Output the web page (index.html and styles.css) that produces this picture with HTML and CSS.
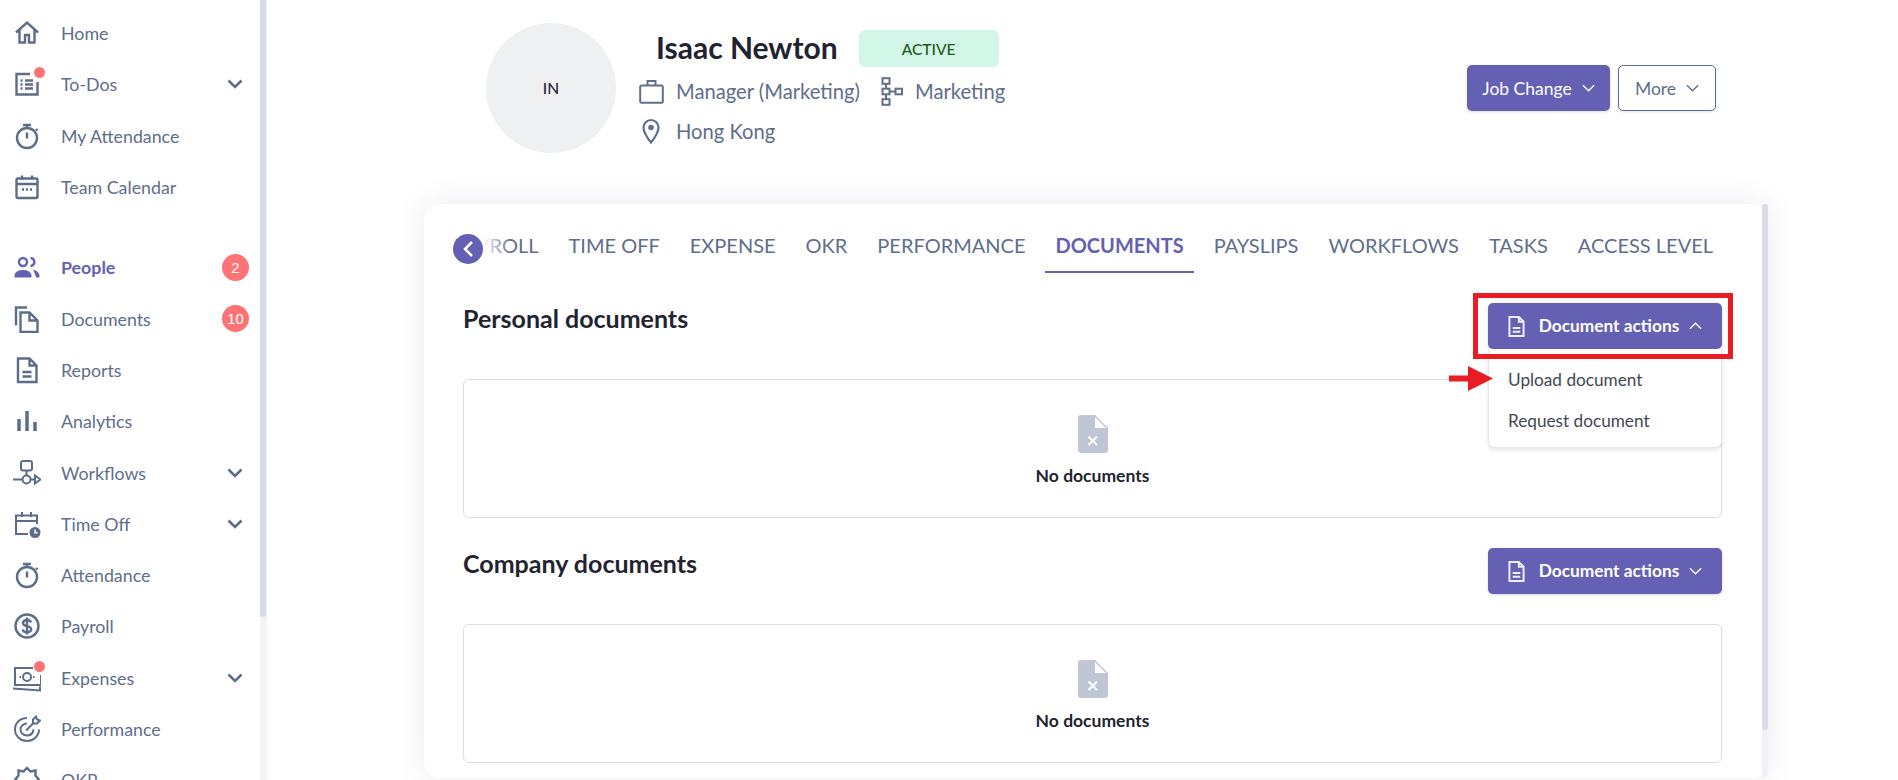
FILE: index.html
```html
<!DOCTYPE html>
<html lang="en">
<head>
<meta charset="utf-8">
<title>Isaac Newton - Documents</title>
<link rel="stylesheet" href="styles.css">
</head>
<body>
<div class="app">
  <nav class="sidebar">
    <div class="nav-group">
      <a class="nav-item"><span class="nav-icon"><svg viewBox="0 0 28 28" class="ico"><path d="M3 13.500 14 3.500l11 10M6.500 11v12.500h5.500V16h4v7.500h5.500V11"/></svg></span><span class="nav-label">Home</span></a>
      <a class="nav-item"><span class="nav-icon"><svg viewBox="0 0 28 28" class="ico"><path d="M17 4H3.500v20.500h21V12M7.500 10.500h2M12 10.500h8M7.500 14.500h2M12 14.500h8M7.500 18.500h2M12 18.500h8"/></svg><i class="dot"></i></span><span class="nav-label">To-Dos</span><svg class="chev" viewBox="0 0 16 10"><path d="M1.500 1.500 8 8l6.500-6.500"/></svg></a>
      <a class="nav-item"><span class="nav-icon"><svg viewBox="0 0 28 28" class="ico"><circle cx="14" cy="16" r="10"/><path d="M10 3h8M14 3v3M14 10.500V16.500M23 7l1.500 1.500"/></svg></span><span class="nav-label">My Attendance</span></a>
      <a class="nav-item"><span class="nav-icon"><svg viewBox="0 0 28 28" class="ico"><rect x="3.500" y="5.500" width="21" height="19.500" rx="1.500"/><path d="M3.500 11h21M9 2.500v4M19 2.500v4M9 16.500h2M13 16.500h2M17 16.500h2"/></svg></span><span class="nav-label">Team Calendar</span></a>
    </div>
    <div class="nav-group nav-group-second">
      <a class="nav-item active"><span class="nav-icon"><svg viewBox="0 0 28 28" class="ico"><circle cx="10" cy="9" r="4"/><path d="M17.500 5c2.500.3 3.800 2 3.800 4s-1.300 3.700-3.800 4"/><path d="M2 24v-1.500c0-3.500 3.500-5 8-5s8 1.500 8 5V24zM20.500 17.500c3 .5 5.500 2 5.500 5V24h-3"/></svg></span><span class="nav-label">People</span><span class="count">2</span></a>
      <a class="nav-item"><span class="nav-icon"><svg viewBox="0 0 28 28" class="ico"><path d="M14 2.500H3v18"/><path d="M7.500 7.500h9l8 8v11.500h-17zM16.500 7.500v8h8" /></svg></span><span class="nav-label">Documents</span><span class="count">10</span></a>
      <a class="nav-item"><span class="nav-icon"><svg viewBox="0 0 28 28" class="ico"><path d="M5 2.500h11.500l7 7v16.500H5zM16.500 2.500v7h7M9.500 16h9M9.500 20.500h9"/></svg></span><span class="nav-label">Reports</span></a>
      <a class="nav-item"><span class="nav-icon"><svg viewBox="0 0 28 28" class="ico bars"><path d="M6 12v12M14 4v20M22 15v9"/></svg></span><span class="nav-label">Analytics</span></a>
      <a class="nav-item"><span class="nav-icon"><svg viewBox="0 0 28 28" class="ico thin"><rect x="8" y="2" width="11" height="9.500" rx="2"/><path d="M13.500 11.500v4.500M0 20.500h9.500M18 20.500h4"/><circle cx="13.500" cy="20.500" r="4"/><path d="M22 16.500l5.500 4-5.500 4z"/></svg></span><span class="nav-label">Workflows</span><svg class="chev" viewBox="0 0 16 10"><path d="M1.500 1.500 8 8l6.500-6.500"/></svg></a>
      <a class="nav-item"><span class="nav-icon"><svg viewBox="0 0 28 28" class="ico thin"><path d="M15 24H3V5.500h21V14M3 11h21M9 2v5M18 2v5"/><circle cx="22" cy="22.500" r="5.500" class="solid"/><path d="M22 19.500v3.300h2.500" class="cut"/></svg></span><span class="nav-label">Time Off</span><svg class="chev" viewBox="0 0 16 10"><path d="M1.500 1.500 8 8l6.500-6.500"/></svg></a>
      <a class="nav-item"><span class="nav-icon"><svg viewBox="0 0 28 28" class="ico"><circle cx="14" cy="16" r="10"/><path d="M10 3h8M14 3v3M14 10.500V16.500M23 7l1.500 1.500"/></svg></span><span class="nav-label">Attendance</span></a>
      <a class="nav-item"><span class="nav-icon"><svg viewBox="0 0 28 28" class="ico"><circle cx="14" cy="14" r="11.500"/><path d="M18 10.500c-.5-1.800-2-2.500-4-2.500-2.300 0-4 1.100-4 3 0 4.500 8.200 1.800 8.200 6.300 0 1.900-1.800 2.900-4.200 2.900-2.300 0-3.900-.9-4.300-2.800M14 5.500v17"/></svg></span><span class="nav-label">Payroll</span></a>
      <a class="nav-item"><span class="nav-icon"><svg viewBox="0 0 28 28" class="ico thin"><path d="M20 4H2v17h26V11"/><path d="M0 24.500l27 2v-4"/><circle cx="14" cy="13" r="4"/><path d="M6.500 13h1.500M20 13h1.500"/></svg><i class="dot"></i></span><span class="nav-label">Expenses</span><svg class="chev" viewBox="0 0 16 10"><path d="M1.500 1.500 8 8l6.500-6.500"/></svg></a>
      <a class="nav-item"><span class="nav-icon"><svg viewBox="0 0 28 28" class="ico thin"><path d="M14 3C7 3 2 8 2 14.500S7.500 26 14 26s12-5 12-11.500"/><path d="M14 8.500c-3.500 0-6.500 2.700-6.500 6s2.800 6 6.500 6 6-2.500 6.500-6"/><path d="M13 15.500l7-7M20 8.500V4.500l3-3 1 3 3 1-3 3z"/></svg></span><span class="nav-label">Performance</span></a>
      <a class="nav-item"><span class="nav-icon"><svg viewBox="0 0 28 28" class="ico"><path d="M14 2l3.500 3.500 5-1v5l3 3.500-3 3.500v5h-17v-5L2.500 13l3-3.500v-5l5 1z"/></svg></span><span class="nav-label">OKR</span></a>
    </div>
  </nav>
  <div class="side-scroll"><div class="side-thumb"></div></div>
  <main class="main">
    <header class="profile">
      <div class="avatar">IN</div>
      <div class="identity">
        <div class="name-row"><h1 class="name">Isaac Newton</h1><span class="status">ACTIVE</span></div>
        <div class="meta-row">
          <svg class="meta-ico brief" viewBox="0 0 25 25"><path d="M8.500 6.500V2h8v4.500"/><rect x="1.200" y="6.500" width="22.600" height="17.300" rx="1.500"/></svg><span class="meta-text">Manager (Marketing)</span>
          <svg class="meta-ico org" viewBox="0 0 22 29"><rect x="1.500" y="1.200" width="7" height="5.600"/><rect x="1.500" y="11.700" width="7" height="5.600"/><rect x="1.500" y="22.200" width="7" height="5.600"/><rect x="14.500" y="11.700" width="6.500" height="5.600"/><path d="M5 6.800v4.900M5 17.300v4.900M8.500 14.500h6"/></svg><span class="meta-text">Marketing</span>
        </div>
        <div class="meta-row">
          <svg class="meta-ico pin" viewBox="0 0 18 26"><path d="M9 24.500C5 19.500 1.500 15 1.500 9.500a7.500 7.500 0 0 1 15 0C16.500 15 13 19.500 9 24.500z"/><circle cx="9" cy="9.500" r="2.800" class="solid"/></svg><span class="meta-text">Hong Kong</span>
        </div>
      </div>
      <div class="profile-actions">
        <button class="btn btn-primary">Job Change<svg class="btn-chev" viewBox="0 0 14 8"><path d="M1 1l6 6 6-6"/></svg></button>
        <button class="btn btn-outline">More<svg class="btn-chev" viewBox="0 0 14 8"><path d="M1 1l6 6 6-6"/></svg></button>
      </div>
    </header>
    <section class="card">
      <div class="tabs-wrap">
        <button class="tab-back"><svg viewBox="0 0 12 18"><path d="M10 2 3 9l7 7"/></svg></button>
        <div class="tab-fade"></div>
        <div class="tabs">
          <a class="tab">PAYROLL</a><a class="tab">TIME OFF</a><a class="tab">EXPENSE</a><a class="tab">OKR</a><a class="tab">PERFORMANCE</a><a class="tab tab-active">DOCUMENTS</a><a class="tab">PAYSLIPS</a><a class="tab">WORKFLOWS</a><a class="tab">TASKS</a><a class="tab">ACCESS LEVEL</a>
        </div>
      </div>
      <div class="doc-section">
        <div class="doc-head">
          <h2 class="doc-title">Personal documents</h2>
          <div class="doc-menu">
            <button class="btn btn-doc"><svg class="doc-ico" viewBox="0 0 18 22"><path d="M1.500 1h10l5 5v15h-15zM11.500 1v5h5M5 12.500h8M5 16.500h8"/></svg>Document actions<svg class="btn-chev" viewBox="0 0 14 8"><path d="M1 7l6-6 6 6"/></svg></button>
            <div class="dropdown"><a class="drop-item">Upload document</a><a class="drop-item">Request document</a></div>
            <div class="red-box"></div>
            <svg class="red-arrow" viewBox="0 0 44 25"><path d="M0 9.500h19V0l25 12.500L19 25v-9.500H0z"/></svg>
          </div>
        </div>
        <div class="empty"><svg class="empty-ico" viewBox="0 0 30 38"><path d="M3 0h14l13 13v22a3 3 0 0 1-3 3H3a3 3 0 0 1-3-3V3a3 3 0 0 1 3-3z"/><path class="fold" d="M17 2 28 13H17z"/><path class="x" d="M10.500 21.500l8.500 8.500M19 21.500 10.500 30"/></svg><div class="empty-text">No documents</div></div>
      </div>
      <div class="doc-section">
        <div class="doc-head">
          <h2 class="doc-title">Company documents</h2>
          <div class="doc-menu">
            <button class="btn btn-doc"><svg class="doc-ico" viewBox="0 0 18 22"><path d="M1.500 1h10l5 5v15h-15zM11.500 1v5h5M5 12.500h8M5 16.500h8"/></svg>Document actions<svg class="btn-chev" viewBox="0 0 14 8"><path d="M1 1l6 6 6-6"/></svg></button>
          </div>
        </div>
        <div class="empty"><svg class="empty-ico" viewBox="0 0 30 38"><path d="M3 0h14l13 13v22a3 3 0 0 1-3 3H3a3 3 0 0 1-3-3V3a3 3 0 0 1 3-3z"/><path class="fold" d="M17 2 28 13H17z"/><path class="x" d="M10.500 21.500l8.500 8.500M19 21.500 10.500 30"/></svg><div class="empty-text">No documents</div></div>
      </div>
      <div class="card-scroll"><div class="card-thumb"></div></div>
    </section>
  </main>
</div>
</body>
</html>
```
FILE: styles.css
```css
* { box-sizing: border-box; }
html, body { margin: 0; height: 100%; overflow: hidden; background: #fff; }
body { font-family: "Lato", "Liberation Sans", sans-serif; color: #5e6e8c; }
a { display: flex; }
h1, h2 { margin: 0; }
button { font-family: inherit; border: 0; cursor: pointer; }
svg { display: block; }

.app { display: flex; height: 780px; overflow: hidden; }

.sidebar { width: 260px; flex: none; padding-top: 7.500px; overflow: hidden; }
.nav-group-second { margin-top: 29px; }
.nav-item { height: 51.300px; align-items: center; padding: 0 12px 0 13px; font-size: 17.800px; color: #5e6e8c; }
.nav-icon { position: relative; width: 28px; height: 28px; flex: none; margin-right: 20px; }
.nav-label { flex: 1; }
.ico { width: 28px; height: 28px; fill: none; stroke: #5c6d8a; stroke-width: 2.400; }
.ico.thin { stroke-width: 2; }
.ico.bars { stroke-width: 3.500; }
.ico .solid { fill: #5c6d8a; stroke: none; }
.ico .cut { stroke: #fff; stroke-width: 1.500; }
.dot { position: absolute; top: -3px; right: -4px; width: 11px; height: 11px; border-radius: 50%; background: #ff7276; }
.chev { width: 16px; height: 10px; margin-right: 5px; fill: none; stroke: #5c6d8a; stroke-width: 2.500; }
.count { width: 27px; height: 27px; border-radius: 50%; background: #ff7276; color: #fff; font-size: 15px; font-weight: 400; display: flex; align-items: center; justify-content: center; margin-right: -1px; font-family: "Liberation Sans", sans-serif; }
.active { color: #6461b4; font-weight: 700; }
.active .ico { stroke: #6461b4; fill: #6461b4; stroke-width: 1; }
.active .ico circle { fill: none; stroke-width: 2.400; }
.active .ico path:first-of-type { fill: none; stroke-width: 2.400; }

.side-scroll { width: 7px; flex: none; background: #f3f4f6; }
.side-thumb { width: 6px; height: 617px; background: #d6dae2; border-radius: 0 0 3px 3px; }

.main { flex: 1; min-width: 0; padding-left: 157px; display: flex; flex-direction: column; }

.profile { width: 1344px; height: 204px; flex: none; display: flex; padding: 23px 52px 0 62px; }
.avatar { width: 130px; height: 130px; flex: none; border-radius: 50%; background: #eff0f2; color: #1f2430; font-size: 15.500px; font-weight: 500; display: flex; align-items: center; justify-content: center; }
.identity { margin-left: 23px; flex: 1; }
.name-row { display: flex; align-items: center; height: 48px; padding: 0 0 1px 17px; }
.name { font-size: 30px; font-weight: 700; color: #1f2430; line-height: 1; }
.status { width: 140px; height: 37px; margin: 4px 0 0 21px; border-radius: 6px; background: #d2f6e7; color: #1c5b12; font-size: 15.500px; font-weight: 500; display: flex; align-items: center; justify-content: center; }
.meta-row { display: flex; align-items: center; height: 40px; font-size: 20.200px; color: #5e6e8c; }
.meta-ico { fill: none; stroke: #5f6f8d; flex: none; stroke-width: 2; }
.brief { width: 25px; height: 25px; margin-right: 12px; }
.org { width: 22px; height: 29px; margin: 0 12px 0 21px; }
.pin { width: 18px; height: 26px; margin: 0 16px 0 3px; stroke-width: 2.200; }
.pin .solid { fill: #5f6f8d; stroke: none; }

.profile-actions { display: flex; gap: 8px; padding-top: 42px; align-items: flex-start; }
.btn { height: 46px; border-radius: 5px; font-size: 17.500px; display: flex; align-items: center; justify-content: center; white-space: nowrap; }
.btn-primary { width: 143px; background: #6461b4; color: #fff; box-shadow: 0 1px 3px rgba(60, 60, 110, .18); }
.btn-outline { width: 98px; background: #fff; color: #5e6e8c; border: 1px solid #5e6e8c; box-shadow: 0 1px 3px rgba(60, 60, 110, .15); }
.btn-chev { width: 13px; height: 8px; margin-left: 10px; fill: none; stroke: currentColor; stroke-width: 1.400; }

.card { position: relative; width: 1344px; height: 574px; flex: none; background: #fff; border-radius: 16px; box-shadow: 0 0 32px rgba(70, 70, 120, .10); padding: 0 46px 0 39px; }
.card-scroll { position: absolute; top: 0; right: 0; bottom: 0; width: 6px; background: #f0f1f8; border-radius: 3px 3px 16px 0; overflow: hidden; }
.card-thumb { height: 526px; background: #d9dce6; border-radius: 3px; }

.tabs-wrap { position: relative; height: 69px; }
.tabs { display: flex; justify-content: flex-end; gap: 10px; height: 69px; overflow: hidden; margin-left: -10px; margin-right: -1px; }
.tab { flex: none; height: 69px; padding: 29px 10px 0; font-size: 20px; line-height: 24px; color: #5e6e8c; }
.tab-active { color: #6461b4; font-weight: 700; border-bottom: 2px solid #6461b4; }
.tab-back { position: absolute; top: 30px; left: -10px; z-index: 2; width: 30px; height: 30px; padding: 0; border-radius: 50%; background: #6461b4; display: flex; align-items: center; justify-content: center; }
.tab-back svg { width: 12px; height: 18px; fill: none; stroke: #fff; stroke-width: 2.500; }
.tab-fade { position: absolute; top: 20px; left: 10px; width: 38px; height: 44px; z-index: 1; background: linear-gradient(90deg, #fff 25%, rgba(255, 255, 255, 0) 100%); }

.doc-head { display: flex; justify-content: space-between; height: 106px; padding-top: 30px; }
.doc-title { font-size: 25px; font-weight: 700; color: #1f2430; line-height: 30px; }
.doc-menu { position: relative; width: 234px; }
.btn-doc { width: 234px; padding-bottom: 3px; background: #6461b4; color: #fff; font-weight: 700; font-size: 17.300px; box-shadow: 0 1px 3px rgba(60, 60, 110, .2); }
.doc-ico { width: 17px; height: 21px; margin: 3px 14px 0 0; fill: none; stroke: #eeeef8; stroke-width: 2.100; }
.btn-doc .btn-chev { margin-top: 1px; }
.dropdown { position: absolute; top: 46px; left: 0; z-index: 3; width: 234px; height: 99px; padding-top: 10px; background: #fff; border: 1px solid #e2e5eb; border-top: 0; border-radius: 0 0 6px 6px; box-shadow: 0 2px 4px rgba(70, 80, 120, .14); }
.drop-item { height: 41px; align-items: center; padding-left: 19px; font-size: 17.200px; color: #414855; }
.red-box { position: absolute; z-index: 4; top: -10px; left: -15px; width: 260px; height: 66px; border: 5px solid #e81c22; }
.red-arrow { position: absolute; z-index: 5; top: 63px; left: -39px; width: 44px; height: 25px; fill: #e81c22; }

.empty { height: 139px; border: 1px solid #dadde4; border-radius: 6px; display: flex; flex-direction: column; align-items: center; padding-top: 35px; }
.empty-ico { width: 30px; height: 38px; fill: #bfc7d5; }
.empty-ico .fold { fill: #fff; }
.empty-ico .x { fill: none; stroke: #fff; stroke-width: 1.800; }
.empty-text { margin-top: 12px; font-size: 17.500px; font-weight: 700; color: #1f2430; }
```
